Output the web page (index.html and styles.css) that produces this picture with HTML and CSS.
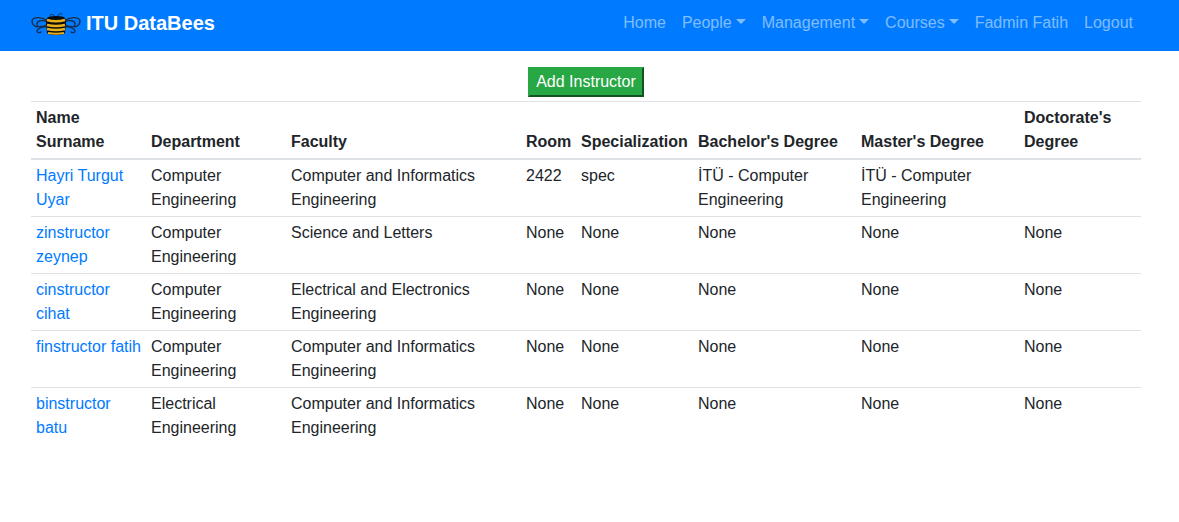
FILE: index.html
```html
<!DOCTYPE html>
<html lang="en">
<head>
<meta charset="utf-8">
<meta name="viewport" content="width=device-width, initial-scale=1">
<title>ITU DataBees</title>
<link rel="stylesheet" href="styles.css">
</head>
<body>
<header class="navbar">
  <div class="container navbar-inner">
    <a class="brand" href="#">
      <svg class="brand-logo" viewBox="0 0 50 24" aria-hidden="true">
        <g fill="none" stroke="#15304f" stroke-width="1.4" stroke-linecap="round">
          <path d="M16 10C12 6 2 5 1 10C1 13 3 15 6 16"/>
          <path d="M16 11C11 8 6 10 6 13C6 17 12 16 16 14"/>
          <path d="M16 16C12 15 7 17 6 20C6 22 9 22 10 21"/>
          <path d="M34 10C38 6 48 5 49 10C49 13 47 15 44 16"/>
          <path d="M34 11C39 8 44 10 44 13C44 17 38 16 34 14"/>
          <path d="M34 16C38 15 43 17 44 20C44 22 41 22 40 21"/>
          <path d="M23 5C22 3 21 3 19 4M27 5C27 3 29 2 31 3" stroke-width="1"/>
        </g>
        <path d="M16 7Q17 5 25 5Q33 5 34 7L35 11L34 22Q32 24 25 24Q18 24 16 22L15 11Z" fill="#0b0c0e"/>
        <g fill="none" stroke="#e8b01c" stroke-width="2.6">
          <path d="M16 9Q25 11.5 34 9"/>
          <path d="M16 14Q25 16 34 14"/>
          <path d="M16 18Q25 20 34 18"/>
          <path d="M17 22Q25 23.5 33 22" stroke-width="1.8"/>
        </g>
      </svg>
      ITU DataBees
    </a>
    <nav class="nav">
      <a class="nav-link" href="#">Home</a>
      <button class="nav-link dropdown" type="button" aria-haspopup="true">People</button>
      <button class="nav-link dropdown" type="button" aria-haspopup="true">Management</button>
      <button class="nav-link dropdown" type="button" aria-haspopup="true">Courses</button>
      <a class="nav-link" href="#">Fadmin Fatih</a>
      <a class="nav-link" href="#">Logout</a>
    </nav>
  </div>
</header>
<main class="content">
  <div class="container">
    <div class="actions"><button class="add-button" type="button">Add Instructor</button></div>
    <table class="table">
      <colgroup>
        <col class="col-name"><col class="col-department"><col class="col-faculty"><col class="col-room">
        <col class="col-specialization"><col class="col-degree"><col class="col-degree"><col class="col-doctorate">
      </colgroup>
      <thead>
        <tr><th>Name Surname</th><th>Department</th><th>Faculty</th><th>Room</th><th>Specialization</th><th>Bachelor's Degree</th><th>Master's Degree</th><th>Doctorate's Degree</th></tr>
      </thead>
      <tbody>
        <tr><td><a href="#">Hayri Turgut Uyar</a></td><td>Computer Engineering</td><td>Computer and Informatics Engineering</td><td>2422</td><td>spec</td><td>İTÜ - Computer Engineering</td><td>İTÜ - Computer Engineering</td><td></td></tr>
        <tr><td><a href="#">zinstructor zeynep</a></td><td>Computer Engineering</td><td>Science and Letters</td><td>None</td><td>None</td><td>None</td><td>None</td><td>None</td></tr>
        <tr><td><a href="#">cinstructor cihat</a></td><td>Computer Engineering</td><td>Electrical and Electronics Engineering</td><td>None</td><td>None</td><td>None</td><td>None</td><td>None</td></tr>
        <tr><td><a href="#">finstructor fatih</a></td><td>Computer Engineering</td><td>Computer and Informatics Engineering</td><td>None</td><td>None</td><td>None</td><td>None</td><td>None</td></tr>
        <tr><td><a href="#">binstructor batu</a></td><td>Electrical Engineering</td><td>Computer and Informatics Engineering</td><td>None</td><td>None</td><td>None</td><td>None</td><td>None</td></tr>
      </tbody>
    </table>
  </div>
</main>
</body>
</html>
```
FILE: styles.css
```css
* { box-sizing: border-box; }

body {
  margin: 0;
  background: #fff;
  color: #212529;
  font: 16px/24px "Liberation Sans", Arial, sans-serif;
}

a { color: #007bff; text-decoration: none; }

.container {
  max-width: 1140px;
  margin: 0 auto;
  padding: 0 15px;
}

.navbar {
  padding: 3px 7px 8px 0;
  background: #007bff;
}

.navbar-inner {
  display: flex;
  align-items: center;
  justify-content: space-between;
}

.brand {
  display: flex;
  align-items: center;
  gap: 5px;
  color: #fff;
  font-size: 20px;
  font-weight: bold;
  white-space: nowrap;
}

.brand-logo { width: 50px; height: 24px; }

.nav { display: flex; }

.nav-link {
  display: flex;
  align-items: center;
  gap: 4px;
  padding: 8px;
  border: 0;
  background: none;
  color: rgba(255, 255, 255, 0.5);
  font: inherit;
  white-space: nowrap;
  cursor: pointer;
}

.dropdown::after {
  content: "";
  margin-bottom: 3px;
  border: 5px solid transparent;
  border-top-color: currentColor;
  border-bottom: 0;
}

.content { padding: 16px 7px 16px 0; }

.actions {
  display: flex;
  justify-content: center;
  padding-bottom: 4px;
}

.add-button {
  padding: 1px 6px;
  border: 2px outset #28a745;
  background: #28a745;
  color: #fff;
  font: inherit;
  cursor: pointer;
}

.table {
  width: 100%;
  table-layout: fixed;
  border-collapse: separate;
  border-spacing: 0;
}

.table th,
.table td {
  padding: 4px 5px;
  border-top: 1px solid #dee2e6;
  text-align: left;
  vertical-align: top;
}

.table th {
  border-bottom: 2px solid #dee2e6;
  vertical-align: bottom;
}

.table tbody tr:first-child td { border-top: 0; }

.col-name { width: 115px; }
.col-department { width: 140px; }
.col-faculty { width: 235px; }
.col-room { width: 55px; }
.col-specialization { width: 117px; }
.col-degree { width: 163px; }
.col-doctorate { width: 122px; }
```
